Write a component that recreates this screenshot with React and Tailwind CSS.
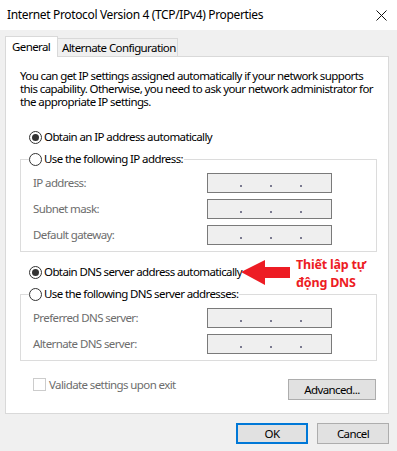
import React from "react";

const font = { fontFamily: '"Noto Sans", "Open Sans", sans-serif' };

function Radio({ checked, label }) {
  return (
    <div className="flex items-center h-[16px] text-black bg-white">
      <span className="w-[13px] h-[13px] rounded-full border border-[#333] bg-white flex items-center justify-center">
        {checked && <span className="w-[7px] h-[7px] rounded-full bg-[#333]" />}
      </span>
      <span className="ml-[2px] leading-[16px] whitespace-nowrap">{label}</span>
    </div>
  );
}

function IpBox() {
  return (
    <div className="w-[125px] h-[20px] border border-[#7a7a7a] bg-[#efefef] flex items-end pl-[32px] pb-[5px] gap-[28px]">
      <span className="w-[2px] h-[2px] bg-[#7a7a90]" />
      <span className="w-[2px] h-[2px] bg-[#7a7a90]" />
      <span className="w-[2px] h-[2px] bg-[#7a7a90]" />
    </div>
  );
}

function FieldRow({ label }) {
  return (
    <div className="flex items-center h-[20px]">
      <span className="w-[174px] text-[#6d6d6d] whitespace-nowrap">{label}</span>
      <IpBox />
    </div>
  );
}

function Group({ legend, rows }) {
  return (
    <fieldset className="w-[357px] border border-[#dcdcdc] pl-[12px] pt-[6px] pb-[6px]">
      <legend className="-ml-[4px] pr-[1px]">
        <Radio label={legend} />
      </legend>
      <div className="flex flex-col gap-[6px]">
        {rows.map((r) => (
          <FieldRow key={r} label={r} />
        ))}
      </div>
    </fieldset>
  );
}

export default function App() {
  return (
    <div
      className="relative w-[397px] h-[451px] bg-[#f0f0f0] overflow-hidden text-[11.5px] tracking-[-0.6px]"
      style={font}
    >
      {/* title bar */}
      <div className="h-[30px] bg-white flex items-center justify-between pl-[7px] pr-[10px]">
        <span className="text-[12px] tracking-[-0.35px] text-black whitespace-nowrap">
          Internet Protocol Version 4 (TCP/IPv4) Properties
        </span>
        <svg width="11" height="11" viewBox="0 0 11 11">
          <path d="M0.5 0.5 L10.5 10.5 M10.5 0.5 L0.5 10.5" stroke="#111" strokeWidth="1" />
        </svg>
      </div>

      <div className="px-[5px] pt-[6px]">
        {/* tabs */}
        <div className="flex items-end h-[20px]">
          <div className="relative z-10 h-[21px] -mb-px w-[53px] border border-b-0 border-[#d9d9d9] bg-white pl-[6px] leading-[19px] text-black">
            General
          </div>
          <div className="h-[18px] border border-l-0 border-b-0 border-[#d9d9d9] bg-[#f0f0f0] pl-[4px] leading-[17px] text-black whitespace-nowrap w-[120px]">
            Alternate Configuration
          </div>
        </div>

        {/* panel */}
        <div className="w-[384px] h-[358px] border border-[#d9d9d9] bg-white pl-[14px] pr-[11px] pt-[12px]">
          <p className="leading-[13px] text-black w-[358px]">
            You can get IP settings assigned automatically if your network supports this capability. Otherwise, you need to ask your network administrator for the appropriate IP settings.
          </p>

          <div className="mt-[21px] ml-[9px]">
            <Radio checked label="Obtain an IP address automatically" />
          </div>
          <div className="mt-[6px]">
            <Group legend="Use the following IP address:" rows={["IP address:", "Subnet mask:", "Default gateway:"]} />
          </div>

          <div className="mt-[12px] ml-[9px]">
            <Radio checked label="Obtain DNS server address automatically" />
          </div>
          <div className="mt-[6px]">
            <Group legend="Use the following DNS server addresses:" rows={["Preferred DNS server:", "Alternate DNS server:"]} />
          </div>

          <div className="mt-[17px] flex justify-between items-start">
            <div className="flex items-center ml-[13px] h-[13px]">
              <span className="w-[13px] h-[13px] border border-[#cccccc] bg-white" />
              <span className="ml-[3px] text-[#6d6d6d] whitespace-nowrap">Validate settings upon exit</span>
            </div>
            <button className="mt-[1px] mr-[1px] w-[88px] h-[21px] border border-[#adadad] bg-[#e1e1e1] text-black">
              Advanced...
            </button>
          </div>
        </div>
      </div>

      {/* bottom buttons */}
      <div className="mt-[9px] flex justify-end gap-[9px] pr-[8px]">
        <button className="w-[72px] h-[21px] border-2 border-[#0078d7] bg-[#e1e1e1] text-black">OK</button>
        <button className="w-[72px] h-[21px] border border-[#adadad] bg-[#e1e1e1] text-black">Cancel</button>
      </div>

      {/* annotation */}
      <div className="absolute left-[240px] top-[256px] flex items-start">
        <svg width="51" height="27" viewBox="0 0 51 27" className="mt-[2px]">
          <polygon points="1,14 25,2 25,9 50,9 50,20 25,20 25,27" fill="#ed1c24" />
        </svg>
        <div className="ml-[5px] text-[12.5px] leading-[18px] font-bold text-[#ed1c24] whitespace-nowrap tracking-[-0.2px]">
          Thiết lập tự
          <br />
          động DNS
        </div>
      </div>
    </div>
  );
}
